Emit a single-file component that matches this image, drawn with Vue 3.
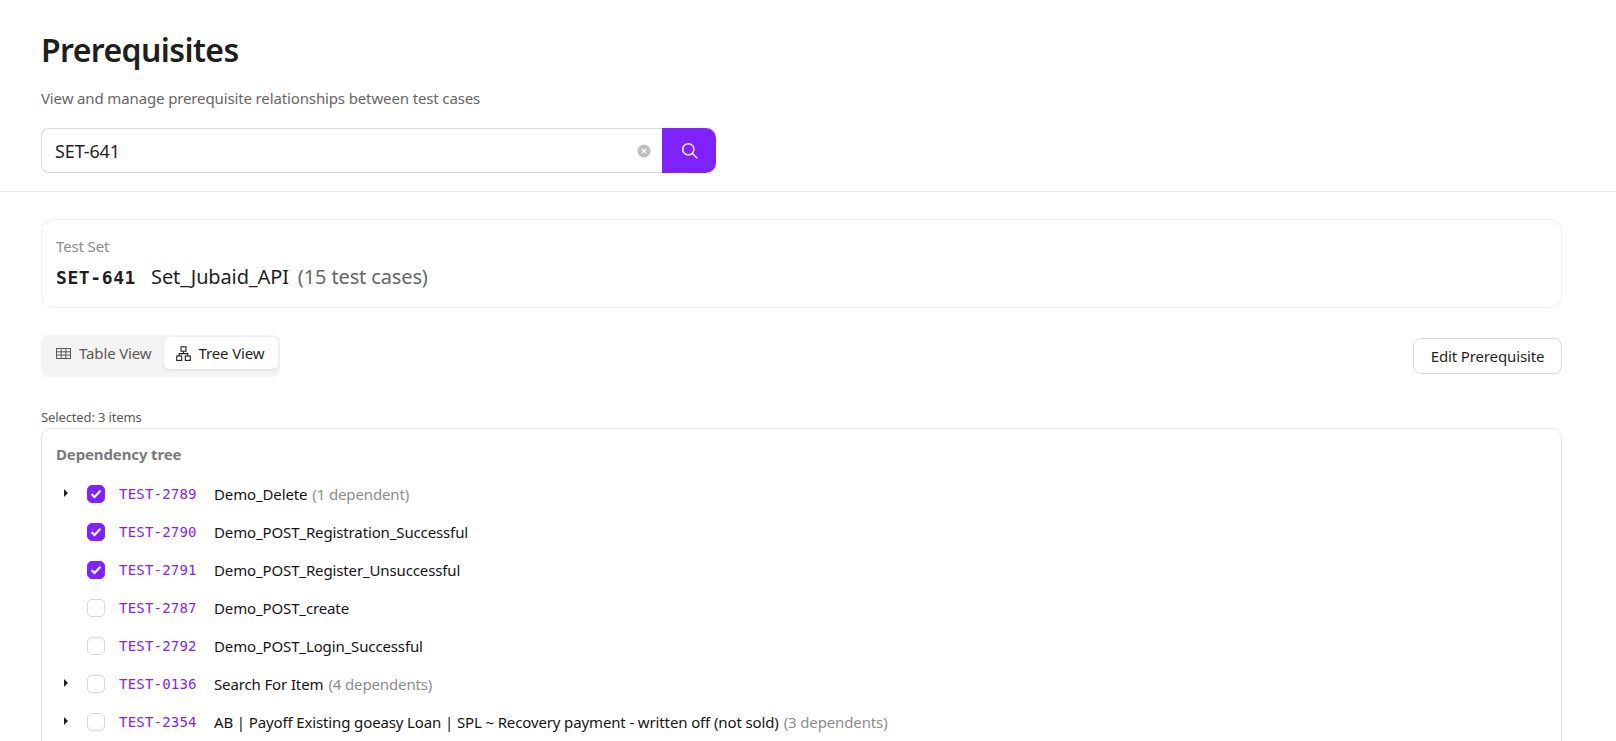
<script setup>
const rows = [
  { code: 'TEST-2789', name: 'Demo_Delete', dep: '(1 dependent)', arrow: true, checked: true },
  { code: 'TEST-2790', name: 'Demo_POST_Registration_Successful', checked: true },
  { code: 'TEST-2791', name: 'Demo_POST_Register_Unsuccessful', checked: true },
  { code: 'TEST-2787', name: 'Demo_POST_create' },
  { code: 'TEST-2792', name: 'Demo_POST_Login_Successful' },
  { code: 'TEST-0136', name: 'Search For Item', dep: '(4 dependents)', arrow: true },
  { code: 'TEST-2354', name: 'AB | Payoff Existing goeasy Loan | SPL ~ Recovery payment - written off (not sold)', dep: '(3 dependents)', arrow: true },
]
</script>

<template>
  <div class="page">
    <header class="head">
      <h1 class="title">Prerequisites</h1>
      <p class="sub">View and manage prerequisite relationships between test cases</p>
      <div class="search">
        <div class="input">
          <span class="value">SET-641</span>
          <svg class="clear" width="14" height="14" viewBox="0 0 14 14">
            <circle cx="7" cy="7" r="6.5" fill="#bfbfbf" />
            <path d="M5 5l4 4M9 5l-4 4" stroke="#fff" stroke-width="1.1" fill="none" />
          </svg>
        </div>
        <button class="go">
          <svg width="17" height="17" viewBox="0 0 17 17" fill="none" stroke="#fff" stroke-width="1.4">
            <circle cx="7.3" cy="7.3" r="5.6" />
            <path d="M11.4 11.4l4.4 4.4" stroke-linecap="round" />
          </svg>
        </button>
      </div>
    </header>

    <main class="body">
      <section class="card">
        <div class="card-label">Test Set</div>
        <div class="card-line">
          <span class="set-code">SET-641</span>
          <span class="set-name">Set_Jubaid_API</span>
          <span class="set-count">(15 test cases)</span>
        </div>
      </section>

      <div class="bar">
        <div class="seg">
          <div class="seg-item">
            <svg width="15" height="15" viewBox="0 0 15 15" fill="none" stroke="#595959" stroke-width="1">
              <rect x="0.5" y="2.5" width="14" height="10" />
              <path d="M0.5 5.8h14M0.5 9.1h14M5.2 2.5v10M9.8 2.5v10" />
            </svg>
            <span>Table View</span>
          </div>
          <div class="seg-item active">
            <svg width="15" height="15" viewBox="0 0 15 15" fill="none" stroke="#1f1f1f" stroke-width="1.1">
              <rect x="5" y="0.8" width="5" height="4.4" />
              <rect x="0.7" y="10" width="5" height="4.4" />
              <rect x="9.3" y="10" width="5" height="4.4" />
              <path d="M7.5 5.2v2.4M3.2 10V7.6h8.6V10" />
            </svg>
            <span>Tree View</span>
          </div>
        </div>
        <button class="edit">Edit Prerequisite</button>
      </div>

      <div class="selected">Selected: 3 items</div>
      <section class="tree">
        <div class="tree-title">Dependency tree</div>
        <div v-for="r in rows" :key="r.code" class="row">
          <span class="caret"><i v-if="r.arrow" class="tri"></i></span>
          <span class="box" :class="{ on: r.checked }">
            <svg v-if="r.checked" width="12" height="10" viewBox="0 0 12 10" fill="none" stroke="#fff" stroke-width="2.2">
              <path d="M1.5 5l3 3 6-6.2" />
            </svg>
          </span>
          <span class="code">{{ r.code }}</span>
          <span class="name">{{ r.name }}</span>
          <span v-if="r.dep" class="dep">{{ r.dep }}</span>
        </div>
      </section>
    </main>
  </div>
</template>

<style>
html, body { margin: 0; background: #fff; overflow: hidden; }
</style>

<style scoped>
.page {
  height: 741px;
  overflow: hidden;
  font-family: "Noto Sans", "Open Sans", sans-serif;
  color: #1f1f1f;
  font-size: 15px;
  letter-spacing: -0.13px;
}
.head {
  padding: 28px 41px 18px;
  border-bottom: 1px solid #e8e8e8;
}
.title {
  margin: 0;
  font-size: 32px;
  line-height: 44px;
  font-weight: 600;
  letter-spacing: -0.6px;
}
.sub {
  margin: 16px 0 0;
  line-height: 20px;
  color: #666;
}
.search {
  margin-top: 20px;
  display: flex;
  width: 675px;
  height: 45px;
}
.input {
  flex: 1;
  display: flex;
  align-items: center;
  justify-content: space-between;
  padding: 0 11px 0 13px;
  border: 1px solid #d9d9d9;
  border-right: 0;
  border-radius: 8px 0 0 8px;
  font-size: 18px;
}
.go {
  width: 54px;
  border: 0;
  padding: 0;
  background: #7f22fe;
  border-radius: 0 10px 10px 0;
  display: flex;
  align-items: center;
  justify-content: center;
}
.body {
  padding: 27px 54px 0 41px;
}
.card {
  height: 89px;
  box-sizing: border-box;
  border: 1px solid #f0f0f0;
  border-radius: 12px;
  padding: 16px 14px;
}
.card-label {
  color: #8c8c8c;
  line-height: 20px;
}
.card-line {
  margin-top: 8px;
  display: flex;
  align-items: baseline;
  font-size: 20px;
  line-height: 26px;
}
.set-code {
  font-family: "DejaVu Sans Mono", monospace;
  font-weight: 700;
  font-size: 18px;
  letter-spacing: 0.6px;
  margin-right: 15px;
}
.set-name { margin-right: 9px; }
.set-count { color: #666; }
.bar {
  margin-top: 27px;
  display: flex;
  justify-content: space-between;
  align-items: flex-start;
}
.seg {
  display: flex;
  padding: 2px;
  background: #f3f3f3;
  border-radius: 8px;
  height: 38px;
  width: 235px;
  box-sizing: content-box;
}
.seg-item {
  display: flex;
  align-items: center;
  gap: 8px;
  padding: 0 12px 0 13px;
  height: 32px;
  color: #595959;
  border-radius: 6px;
}
.seg-item.active {
  background: #fff;
  color: #1f1f1f;
  padding: 0 13px 0 12px;
  box-shadow: 0 1px 3px rgba(0, 0, 0, 0.1);
}
.edit {
  margin-top: 3px;
  width: 149px;
  height: 36px;
  background: #fff;
  border: 1px solid #d9d9d9;
  border-radius: 8px;
  font: inherit;
  color: #1f1f1f;
  letter-spacing: inherit;
}
.selected {
  margin-top: 32px;
  font-size: 13px;
  line-height: 16px;
  color: #595959;
}
.tree {
  margin-top: 3px;
  border: 1px solid #e5e5e5;
  border-radius: 10px;
  padding: 15px 14px;
  height: 400px;
}
.tree-title {
  font-weight: 700;
  color: #7a7a7a;
  line-height: 20px;
  margin-bottom: 11px;
}
.row {
  height: 38px;
  display: flex;
  align-items: center;
}
.caret {
  width: 31px;
  flex: none;
  padding-left: 8px;
  box-sizing: border-box;
}
.tri {
  display: block;
  margin-top: -3px;
  width: 0;
  height: 0;
  border-left: 4px solid #1f1f1f;
  border-top: 4px solid transparent;
  border-bottom: 4px solid transparent;
}
.box {
  width: 18px;
  height: 18px;
  box-sizing: border-box;
  border: 1px solid #d9d9d9;
  border-radius: 5px;
  display: flex;
  align-items: center;
  justify-content: center;
  flex: none;
}
.box.on {
  background: #7f22fe;
  border-color: #7f22fe;
}
.code {
  margin-left: 14px;
  width: 95px;
  flex: none;
  font-family: "DejaVu Sans Mono", monospace;
  color: #7f22fe;
  font-size: 14px;
  letter-spacing: 0.2px;
}
.name { color: #141414; }
.dep {
  color: #8c8c8c;
  margin-left: 5px;
}
</style>
